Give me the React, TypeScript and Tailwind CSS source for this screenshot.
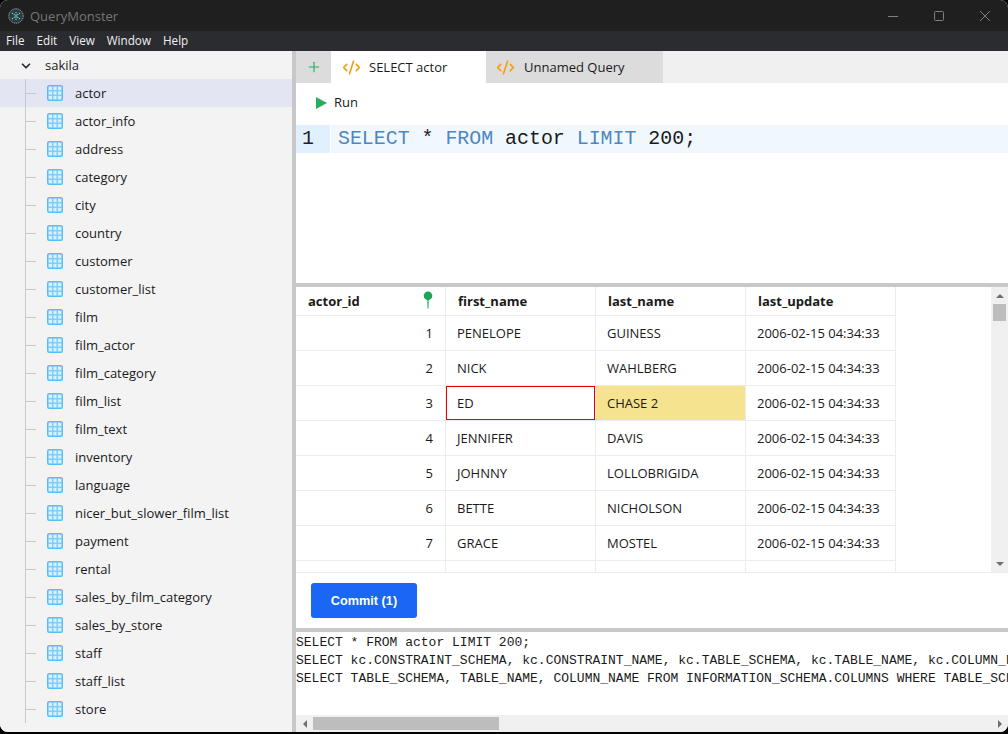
import React from "react";
import { ChevronDown, CodeXml, Plus } from "lucide-react";

const tables = [
    "actor", "actor_info", "address", "category", "city", "country", "customer",
    "customer_list", "film", "film_actor", "film_category", "film_list", "film_text",
    "inventory", "language", "nicer_but_slower_film_list", "payment", "rental",
    "sales_by_film_category", "sales_by_store", "staff", "staff_list", "store",
];

const rows = [
    ["1", "PENELOPE", "GUINESS"],
    ["2", "NICK", "WAHLBERG"],
    ["3", "ED", "CHASE 2"],
    ["4", "JENNIFER", "DAVIS"],
    ["5", "JOHNNY", "LOLLOBRIGIDA"],
    ["6", "BETTE", "NICHOLSON"],
    ["7", "GRACE", "MOSTEL"],
];

function TableIcon() {
    return (
        <svg width="16" height="16" viewBox="0 0 16 16" className="shrink-0">
            <rect x="0.75" y="0.75" width="14.5" height="14.5" rx="1.5" fill="#d6f0fd" stroke="#55bdf5" strokeWidth="1.5" />
            <path d="M5.75 1v14M10.25 1v14M1 5.75h14M1 10.25h14" stroke="#7fcdf6" strokeWidth="1.5" />
        </svg>
    );
}

function Logo() {
    return (
        <svg width="16" height="16" viewBox="0 0 16 16" className="shrink-0">
            <circle cx="8" cy="8" r="7.2" fill="#2f3a3d" stroke="#8fb5bb" strokeWidth="1" strokeDasharray="1.2 0.8" />
            <path d="M4 5l8 6M4 11l8-6M8 4v8" stroke="#6fd8e6" strokeWidth="1.1" strokeDasharray="1.3 0.9" />
        </svg>
    );
}

function Arrow({ points }: { points: string }) {
    return (
        <svg width="8" height="8" viewBox="0 0 8 8">
            <polygon points={points} fill="#6e6e6e" />
        </svg>
    );
}

export default function App() {
    return (
        <div className="w-[1008px] h-[734px] overflow-hidden bg-black font-['Open_Sans',sans-serif] text-[13px] text-[#1a1a1a]">
            <div className="h-[732px] flex flex-col overflow-hidden rounded-[8px] bg-white">
                {/* Title bar */}
                <div className="h-[31px] shrink-0 flex items-center bg-[#1f1f1f] pl-[8px]">
                    <Logo />
                    <span className="ml-[6px] pt-[2px] text-[#767676]">QueryMonster</span>
                    <div className="ml-auto flex items-center">
                        <div className="w-[46px] flex justify-center">
                            <svg width="10" height="10" viewBox="0 0 10 10">
                                <path d="M0 5.5h10" stroke="#808080" />
                            </svg>
                        </div>
                        <div className="w-[46px] flex justify-center">
                            <svg width="10" height="10" viewBox="0 0 10 10">
                                <rect x="0.5" y="0.5" width="9" height="9" rx="1" fill="none" stroke="#808080" />
                            </svg>
                        </div>
                        <div className="w-[46px] flex justify-center">
                            <svg width="10" height="10" viewBox="0 0 10 10">
                                <path d="M0 0l10 10M10 0L0 10" stroke="#808080" />
                            </svg>
                        </div>
                    </div>
                </div>

                {/* Menu */}
                <div className="h-[20px] shrink-0 flex items-center gap-[12px] bg-[#2a2c30] pl-[6px] text-[11.7px] text-[#f0f0f0]">
                    <span>File</span>
                    <span>Edit</span>
                    <span>View</span>
                    <span>Window</span>
                    <span>Help</span>
                </div>

                <div className="flex-1 flex min-h-0">
                    {/* Sidebar */}
                    <div className="w-[292px] shrink-0 bg-[#f3f3f3] overflow-hidden">
                        <div className="h-[28px] flex items-center pl-[19px] pt-[2px]">
                            <ChevronDown size={14} strokeWidth={3} className="text-[#2a2a3a]" />
                            <span className="ml-[12px]">sakila</span>
                        </div>
                        {tables.map((t, i) => (
                            <div
                                key={t}
                                className={
                                    i === 0
                                        ? "h-[28px] flex items-center pl-[25px] bg-[#e3e5f2]"
                                        : "h-[28px] flex items-center pl-[25px]"
                                }
                            >
                                <span className="w-px self-stretch bg-[#c8c8c8]" />
                                <span className="w-[10px] h-px bg-[#c8c8c8]" />
                                <span className="ml-[11px]">
                                    <TableIcon />
                                </span>
                                <span className="ml-[12px] pt-[2px]">{t}</span>
                            </div>
                        ))}
                    </div>
                    <div className="w-[4px] shrink-0 bg-[#c8c8c8]" />

                    {/* Main */}
                    <div className="flex-1 min-w-0 flex flex-col">
                        {/* Tabs */}
                        <div className="h-[32px] shrink-0 flex bg-[#f0f0f0]">
                            <div className="w-[35px] flex items-center justify-center bg-[#dcdcdc]">
                                <Plus size={16} strokeWidth={1.7} className="text-[#27ae60]" />
                            </div>
                            <div className="w-[155px] flex items-center pl-[11px] bg-white">
                                <CodeXml size={19} strokeWidth={2} className="text-[#f59e0b]" />
                                <span className="ml-[8px] pt-[2px]">SELECT actor</span>
                            </div>
                            <div className="w-[177px] flex items-center pl-[10px] bg-[#dcdcdc]">
                                <CodeXml size={19} strokeWidth={2} className="text-[#f59e0b]" />
                                <span className="ml-[9px] pt-[2px]">Unnamed Query</span>
                            </div>
                        </div>

                        {/* Editor */}
                        <div className="h-[200px] shrink-0 bg-white">
                            <div className="h-[42px] flex items-center pl-[20px] pb-[2px]">
                                <svg width="11" height="12" viewBox="0 0 11 12">
                                    <polygon points="0,0 11,6 0,12" fill="#27ae60" />
                                </svg>
                                <span className="ml-[7px]">Run</span>
                            </div>
                            <div className="h-[28px] flex font-['Liberation_Mono',monospace] text-[19.9px] leading-[28px]">
                                <div className="w-[34px] pl-[6px] bg-[#e1f0fe] text-[#222]">1</div>
                                <div className="flex-1 ml-px pl-[7px] bg-[#f0f8fe] whitespace-pre">
                                    <span className="text-[#4f86c0]">SELECT</span>
                                    <span> * </span>
                                    <span className="text-[#4f86c0]">FROM</span>
                                    <span> actor </span>
                                    <span className="text-[#4f86c0]">LIMIT</span>
                                    <span> 200;</span>
                                </div>
                            </div>
                        </div>
                        <div className="h-[4px] shrink-0 bg-[#c8c8c8]" />

                        {/* Result grid */}
                        <div className="h-[286px] shrink-0 flex border-b border-[#ececec] overflow-hidden">
                            <div className="flex-1 min-w-0 overflow-hidden">
                                <div className="h-[28px] flex items-center font-bold">
                                    <div className="w-[150px] h-full flex items-center justify-between pl-[12px] pr-[12px] pt-px border-r border-[#ececec]">
                                        <span>actor_id</span>
                                        <svg width="10" height="18" viewBox="0 0 10 18" className="mt-[-3px]">
                                            <path d="M3.8 7h2.4l-.4 10.5h-1.4z" fill="#5fd08f" />
                                            <circle cx="5" cy="4.7" r="4.3" fill="#1fa35b" />
                                        </svg>
                                    </div>
                                    <div className="w-[150px] h-full flex items-center pl-[12px] pt-px border-r border-[#ececec]">first_name</div>
                                    <div className="w-[150px] h-full flex items-center pl-[12px] pt-px border-r border-[#ececec]">last_name</div>
                                    <div className="w-[150px] h-full flex items-center pl-[12px] pt-px border-r border-[#ececec]">last_update</div>
                                </div>
                                {rows.map((r) => (
                                    <div key={r[0]} className="w-[600px] h-[35px] flex border-t border-[#ececec]">
                                        <div className="w-[150px] flex items-center justify-end pr-[12px] pt-[2px] border-r border-[#ececec]">{r[0]}</div>
                                        {r[0] === "3" ? (
                                            <div className="w-[150px] flex border-r border-[#ececec]">
                                                <div className="flex-1 flex items-center pl-[10px] pt-[2px] border border-[#f00000]">{r[1]}</div>
                                            </div>
                                        ) : (
                                            <div className="w-[150px] flex items-center pl-[11px] pt-[2px] border-r border-[#ececec]">{r[1]}</div>
                                        )}
                                        {r[0] === "3" ? (
                                            <div className="w-[150px] flex items-center pl-[11px] pt-[2px] bg-[#f5e38f] border-r border-[#ececec]">{r[2]}</div>
                                        ) : (
                                            <div className="w-[150px] flex items-center pl-[11px] pt-[2px] border-r border-[#ececec]">{r[2]}</div>
                                        )}
                                        <div className="w-[150px] flex items-center pl-[11px] pt-[2px] border-r border-[#ececec]">2006-02-15 04:34:33</div>
                                    </div>
                                ))}
                                <div className="w-[600px] h-[13px] flex border-t border-[#ececec]">
                                    <div className="w-[150px] border-r border-[#ececec]" />
                                    <div className="w-[150px] border-r border-[#ececec]" />
                                    <div className="w-[150px] border-r border-[#ececec]" />
                                    <div className="w-[150px] border-r border-[#ececec]" />
                                </div>
                            </div>
                            <div className="w-[17px] shrink-0 flex flex-col items-center bg-[#f0f0f0]">
                                <div className="h-[17px] flex items-center justify-center">
                                    <Arrow points="0,6 4,2 8,6" />
                                </div>
                                <div className="w-[13px] h-[17px] bg-[#bdbdbd]" />
                                <div className="flex-1" />
                                <div className="h-[17px] flex items-center justify-center">
                                    <Arrow points="0,2 8,2 4,6" />
                                </div>
                            </div>
                        </div>

                        {/* Commit */}
                        <div className="h-[55px] shrink-0 pl-[15px] pt-[10px] bg-white">
                            <button className="w-[106px] h-[35px] pt-[2px] rounded-[3px] bg-[#1a66f5] font-['Liberation_Sans',sans-serif] text-[12.7px] font-bold text-white">
                                Commit (1)
                            </button>
                        </div>
                        <div className="h-[4px] shrink-0 bg-[#c8c8c8]" />

                        {/* Log */}
                        <div className="flex-1 min-h-0 flex flex-col">
                            <div className="flex-1 min-h-0 overflow-hidden pt-[2px] whitespace-pre font-['Liberation_Mono',monospace] text-[13px] leading-[18px]">
                                <div>SELECT * FROM actor LIMIT 200;</div>
                                <div>SELECT kc.CONSTRAINT_SCHEMA, kc.CONSTRAINT_NAME, kc.TABLE_SCHEMA, kc.TABLE_NAME, kc.COLUMN_NAME FROM</div>
                                <div>SELECT TABLE_SCHEMA, TABLE_NAME, COLUMN_NAME FROM INFORMATION_SCHEMA.COLUMNS WHERE TABLE_SCHEMA = 'sakila'</div>
                            </div>
                            <div className="h-[17px] shrink-0 flex items-center bg-[#f0f0f0]">
                                <div className="w-[17px] flex items-center justify-center">
                                    <Arrow points="6,0 6,8 2,4" />
                                </div>
                                <div className="w-[186px] h-[13px] bg-[#bdbdbd]" />
                                <div className="flex-1" />
                                <div className="w-[17px] flex items-center justify-center">
                                    <Arrow points="2,0 6,4 2,8" />
                                </div>
                            </div>
                        </div>
                    </div>
                </div>
            </div>
        </div>
    );
}
